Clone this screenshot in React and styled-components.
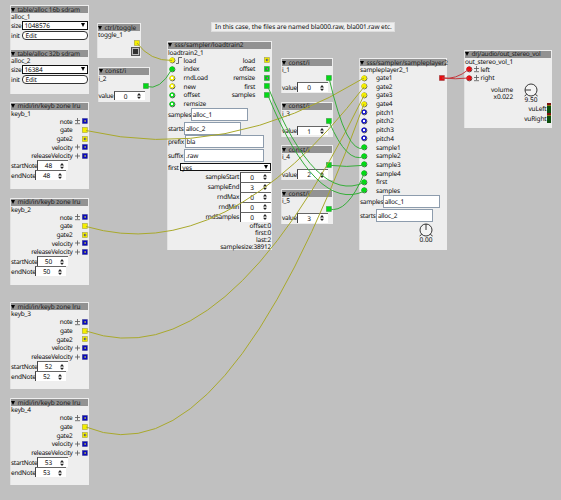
import React from "react";
import styled, { createGlobalStyle } from "styled-components";

const Global = createGlobalStyle`
  body { margin: 0; background: #c0c0c0; overflow: hidden; }
  * { box-sizing: border-box; }
`;

const Canvas = styled.main`
  position: relative;
  width: 561px;
  height: 500px;
  overflow: hidden;
  background: #c0c0c0;
  color: #0c0c0c;
  font: 6.5px/7px "Noto Sans", sans-serif;
  letter-spacing: -0.28px;
  white-space: pre;
  text-rendering: geometricPrecision;
`;

const Panel = styled.section`
  position: absolute;
  left: ${(p) => p.$x}px;
  top: ${(p) => p.$y}px;
  width: ${(p) => p.$w}px;
  height: ${(p) => p.$h}px;
  padding: 1px 1px 1px 0;
  display: flex;
  flex-direction: column;
  background: #eeeeee;
  border-left: 1px solid #e2e2e2;
`;

const Header = styled.header`
  flex: none;
  height: 7px;
  display: flex;
  align-items: center;
  gap: 2px;
  padding-left: 0.4px;
  background: #929292;
  color: #1c1c1c;
  letter-spacing: ${(p) => p.$ls ?? -0.08}px;
`;

const Title = styled.span`
  height: 6px;
  line-height: 5.6px;
`;

const Name = styled.div`
  flex: none;
  height: 7.2px;
  line-height: 7.6px;
  letter-spacing: -0.18px;
`;

const PortRow = styled.div`
  flex: none;
  height: 8.7px;
  display: flex;
  align-items: center;
  justify-content: space-between;
`;

const Inlet = styled.span`
  display: flex;
  align-items: center;
  height: 7px;
  letter-spacing: -0.2px;
`;

const InMark = styled.span`
  width: ${(p) => p.$w}px;
  display: flex;
  align-items: center;
  justify-content: center;
`;

const Outlet = styled.span`
  margin-left: auto;
  display: flex;
  align-items: center;
  justify-content: flex-end;
  height: 7px;
  padding-right: ${(p) => p.$pad}px;
`;

const OutMark = styled.span`
  width: ${(p) => p.$w}px;
  display: flex;
  justify-content: flex-end;
  align-items: center;
  padding-right: ${(p) => (p.$sign ? 2 : 0)}px;
`;

const FieldRow = styled.div`
  flex: none;
  height: ${(p) => p.$h ?? 10}px;
  display: flex;
  align-items: center;
  justify-content: ${(p) => (p.$end ? "flex-end" : "flex-start")};
`;

const Label = styled.span`
  flex: none;
  width: ${(p) => (p.$w ? `${p.$w}px` : "auto")};
  margin-right: ${(p) => p.$gap ?? 0}px;
`;

const NumberBox = styled.span`
  width: 31px;
  height: 9.6px;
  display: flex;
  align-items: center;
  justify-content: space-between;
  padding: 0 4px 0 0;
  background: #fff;
  border-left: 1px solid #444;
  border-top: 1px solid #666;
  letter-spacing: 0;
`;

const NumberValue = styled.span`
  flex: 1;
  text-align: center;
`;

const TextBox = styled.span`
  width: ${(p) => p.$w}px;
  height: 13px;
  padding: 2px 1px 0 0.5px;
  background: #fff;
  border: 1px solid #8d9cad;
  letter-spacing: -0.2px;
`;

const Select = styled.span`
  flex: 1;
  height: 8.6px;
  display: flex;
  align-items: center;
  justify-content: space-between;
  padding: 0 2px 0 1px;
  background: #fff;
  border: 1px solid #111;
  letter-spacing: -0.08px;
`;

const Pill = styled.span`
  flex: 1;
  height: 8.6px;
  padding-left: 3px;
  line-height: 7px;
  background: #fff;
  border: 1px solid #333;
  border-radius: 4px;
  letter-spacing: -0.1px;
`;

const ToggleButton = styled.span`
  align-self: flex-end;
  width: 9px;
  height: 9px;
  background: #303030;
  border: 1px solid #555;
  outline: 1px solid #bbb;
  outline-offset: -2px;
`;

const Readout = styled.div`
  flex: none;
  height: 6.9px;
  text-align: right;
  letter-spacing: -0.2px;
`;

const DialColumn = styled.div`
  display: flex;
  flex-direction: column;
  align-items: center;
  line-height: 6px;
  letter-spacing: 0;
`;

const DialRow = styled.div`
  display: flex;
  justify-content: flex-end;
  padding: 1px 13px 0 0;
`;

const VolumeRow = styled.div`
  display: flex;
  justify-content: flex-end;
  gap: 11px;
  height: 21px;
  padding-right: 12.5px;
  letter-spacing: -0.1px;
`;

const VolumeColumn = styled(DialColumn)`
  padding-top: 1px;
`;

const VolumeText = styled.div`
  padding-top: 5px;
  text-align: right;
  line-height: 6.8px;
`;

const MeterRow = styled.div`
  height: 10px;
  display: flex;
  align-items: center;
  justify-content: flex-end;
  letter-spacing: -0.15px;
`;

const Meter = styled.span`
  width: 4px;
  height: 9.5px;
  background: linear-gradient(#7c1010 0 20%, #8a7a10 20% 32%, #0c4d0c 32%);
`;

const Comment = styled.aside`
  position: absolute;
  left: 211px;
  top: 22px;
  width: 184px;
  height: 10px;
  padding-left: 3px;
  line-height: 8.6px;
  background: #eee;
  border: 1px solid #ddd;
  letter-spacing: -0.07px;
`;

const Wires = styled.svg`
  position: absolute;
  inset: 0;
  pointer-events: none;
  fill: none;
  stroke-width: 1;
`;

const Glyph = styled.svg`
  display: block;
  flex: none;
  overflow: visible;
`;

const COLORS = { y: "#f4ee00", b: "#0808c8", g: "#00dc14", r: "#e80c10" };

function Square({ c, on }) {
  return (
    <Glyph width="6" height="6">
      <rect x="0.3" y="0.4" width="5.2" height="5.2" fill={COLORS[c]} stroke="#444" strokeOpacity=".45" strokeWidth=".6" />
      {!on && (
        <>
          <rect x="1.9" y="1.9" width="2.2" height="2.2" fill="#222" />
          <rect x="2.5" y="2.4" width="1.2" height="1.2" fill="#fff" />
        </>
      )}
    </Glyph>
  );
}

function Ring({ c, on }) {
  return (
    <Glyph width="6" height="6">
      <circle cx="3.4" cy="3.4" r="2.5" stroke="#222" strokeOpacity=".75" fill="none" strokeWidth="1" />
      <circle cx="3" cy="3" r={on ? 2.6 : 1.9} fill={on ? COLORS[c] : "#fff"} stroke={on ? "none" : COLORS[c]} strokeWidth="1.4" />
    </Glyph>
  );
}

const Triangle = () => (
  <Glyph width="4" height="4">
    <path d="M0 0H4L2 4Z" fill="#000" />
  </Glyph>
);

const Spinner = () => (
  <Glyph width="4" height="6">
    <path d="M0 2.4H4L2 0ZM0 3.7H4L2 6Z" fill="#222" />
  </Glyph>
);

const Sign = ({ minus }) => (
  <Glyph width="5" height="6">
    <path d={minus ? "M0 2.5H5M2.5 0V5M0 5.7H5" : "M0 3H5M2.5 .5V5.5"} stroke="#555" strokeWidth=".8" />
  </Glyph>
);

function Dial({ left }) {
  return (
    <Glyph width="14" height="14" fill="none" stroke="#222" strokeWidth=".9">
      <circle cx="7" cy="7" r="6" fill="#f4f4f4" />
      <path d={left ? "M7 7H1.2M2.7 11.4L.6 13M11.3 11.4L13.6 13" : "M7 7V1M2.7 11.4L.6 13M11.3 11.4L13.6 13"} />
    </Glyph>
  );
}

function Node({ x, y, w, h, title, name, ls, children }) {
  return (
    <Panel $x={x} $y={y} $w={w} $h={h}>
      <Header $ls={ls}>
        <Triangle />
        <Title>{title}</Title>
      </Header>
      <Name>{name}</Name>
      {children}
    </Panel>
  );
}

function Output({ label, c, on, sign, w = 0, pad = 0.5 }) {
  return (
    <Outlet $pad={pad}>
      {label}
      <OutMark $w={w} $sign={!!sign}>
        {sign && <Sign minus={sign === "pm"} />}
      </OutMark>
      <Square c={c} on={on} />
    </Outlet>
  );
}

const NumField = ({ value }) => (
  <NumberBox>
    <NumberValue>{value}</NumberValue>
    <Spinner />
  </NumberBox>
);

function Alloc({ y, n, size }) {
  return (
    <Node x={10} y={y} w={79} h={45} title={`table/alloc ${n === 1 ? "16b" : "32b"} sdram`} name={`alloc_${n}`} ls={-0.17}>
      <FieldRow $h={10.6}>
        <Label $w={11.4}>size</Label>
        <Select>
          {size}
          <Triangle />
        </Select>
      </FieldRow>
      <FieldRow>
        <Label $w={10.6}>init</Label>
        <Pill>Edit</Pill>
      </FieldRow>
    </Node>
  );
}

const KEYB_OUTS = [
  ["note", "b", false, "pm"],
  ["gate", "y", true],
  ["gate2", "y", false],
  ["velocity", "b", false, "p"],
  ["releaseVelocity", "b", false, "p"],
];

function Keyb({ y, n, note }) {
  return (
    <Node x={10} y={y} w={79} h={87} title="midi/in/keyb zone lru" name={`keyb_${n}`}>
      {KEYB_OUTS.map(([label, c, on, sign]) => (
        <PortRow key={label}>
          <Output label={label} c={c} on={on} sign={sign} w={9} />
        </PortRow>
      ))}
      <FieldRow>
        <Label $w={25.5}>startNote</Label>
        <NumField value={note} />
      </FieldRow>
      <FieldRow>
        <Label $w={23.6}>endNote</Label>
        <NumField value={note} />
      </FieldRow>
    </Node>
  );
}

function Const({ x, y, n, value }) {
  return (
    <Node x={x} y={y} w={52} h={35} title="const/i" name={`i_${n}`} ls={0.1}>
      <PortRow>
        <Output c="g" on pad={0} />
      </PortRow>
      <FieldRow>
        <Label $w={15}>value</Label>
        <NumField value={value} />
      </FieldRow>
    </Node>
  );
}

function TextField({ label, lw, w, value }) {
  return (
    <FieldRow $h={13.6}>
      <Label $w={lw}>{label}</Label>
      <TextBox $w={w}>{value}</TextBox>
    </FieldRow>
  );
}

const SAMPLER_PORTS = [
  ["load", "y", true, "load", "y", false],
  ["index", "g", true, "offset", "g", false],
  ["rndLoad", "y", false, "remsize", "g", false],
  ["new", "y", false, "first", "g", true],
  ["offset", "g", false, "samples", "g", true],
  ["remsize", "g", false],
];

function Sampler() {
  return (
    <Node x={167} y={40.7} w={105} h={209.5} title="sss/sampler/loadtrain2" name="loadtrain2_1" ls={-0.05}>
      {SAMPLER_PORTS.map(([a, ac, aOn, b, bc, bOn]) => (
        <PortRow key={a}>
          <Inlet>
            <InMark $w={7.4}>
              <Ring c={ac} on={aOn} />
            </InMark>
            <InMark $w={8.2}>
              {a === "load" && (
                <Glyph width="6" height="7">
                  <path d="M0 6.5H2.5V.5H6" fill="none" stroke="#555" strokeWidth=".9" />
                </Glyph>
              )}
            </InMark>
            {a}
          </Inlet>
          {b && <Output label={b} c={bc} on={bOn} w={9} pad={1} />}
        </PortRow>
      ))}
      <TextField label="samples" lw={23.2} w={57} value="alloc_1" />
      <TextField label="starts" lw={16.4} w={57} value="alloc_2" />
      <TextField label="prefix" lw={17} w={79} value="bla" />
      <TextField label="suffix" lw={16.4} w={80} value=".raw" />
      <FieldRow $h={9.6}>
        <Label $w={12.2}>first</Label>
        <Select>
          yes
          <Triangle />
        </Select>
      </FieldRow>
      {[["sampleStart", 0], ["sampleEnd", 3], ["rndMax", 0], ["rndMin", 0], ["rndSamples", 0]].map(([l, v]) => (
        <FieldRow key={l} $end>
          <Label $gap={0.9}>{l}</Label>
          <NumField value={v} />
        </FieldRow>
      ))}
      {["offset:0", "first:0", "last:2", "samplesize:38912"].map((t) => (
        <Readout key={t}>{t}</Readout>
      ))}
    </Node>
  );
}

const PLAYER_PORTS = [
  ...[1, 2, 3, 4].map((n) => [`gate${n}`, "y", true]),
  ...[1, 2, 3, 4].map((n) => [`pitch${n}`, "b", false]),
  ...[1, 2, 3, 4].map((n) => [`sample${n}`, "g", true]),
  ["first", "g", true],
  ["samples", "g", true],
];

function Player() {
  return (
    <Node x={359} y={58} w={88} h={192} title="sss/sampler/sampleplayer2" name="sampleplayer2_1" ls={-0.1}>
      {PLAYER_PORTS.map(([l, c, on]) => (
        <PortRow key={l}>
          <Inlet>
            <InMark $w={8}>
              <Ring c={c} on={on} />
            </InMark>
            <InMark $w={8} />
            {l}
          </Inlet>
          {l === "gate1" && <Output c="r" on pad={1} />}
        </PortRow>
      ))}
      <TextField label="samples" lw={23.2} w={57} value="alloc_1" />
      <TextField label="starts" lw={16.4} w={57} value="alloc_2" />
      <DialRow>
        <DialColumn>
          <Dial />
          0.00
        </DialColumn>
      </DialRow>
    </Node>
  );
}

function StereoOut() {
  return (
    <Node x={464} y={49.6} w={87.5} h={78.4} title="drj/audio/out_stereo_vol" name="out_stereo_vol_1" ls={-0.24}>
      {["left", "right"].map((l) => (
        <PortRow key={l}>
          <Inlet>
            <InMark $w={7}>
              <Ring c="r" on />
            </InMark>
            <InMark $w={8.6}>
              <Sign minus />
            </InMark>
            {l}
          </Inlet>
        </PortRow>
      ))}
      <VolumeRow>
        <VolumeText>
          volume
          <br />
          x0.022
        </VolumeText>
        <VolumeColumn>
          <Dial left />
          9.50
        </VolumeColumn>
      </VolumeRow>
      <MeterRow>
        vuLeft
        <Meter />
      </MeterRow>
      <MeterRow>
        vuRight
        <Meter />
      </MeterRow>
    </Node>
  );
}

const WIRES = [
  ["#a9a92c", "M137 43Q150 61 172 60.5"],
  ["#a9a92c", "M86 130.5Q225 163 364 78"],
  ["#a9a92c", "M86 226.5Q225 267 364 87"],
  ["#a9a92c", "M86 331Q225 380 364 95.5"],
  ["#a9a92c", "M86 427Q225 485 364 104"],
  ["#36ae3a", "M146 86.5Q160 91 172 69"],
  ["#36ae3a", "M268 87Q316 205 364 182.5"],
  ["#36ae3a", "M268 95.5Q316 213 364 191.3"],
  ["#36ae3a", "M329 78Q347 155 364 148"],
  ["#36ae3a", "M329 121.5Q347 164 364 156.5"],
  ["#36ae3a", "M329 165.3Q347 167.5 364 165.3"],
  ["#36ae3a", "M329 209Q347 214 364 174"],
  ["#c43a3e", "M442 78Q456 80 468.5 69.5"],
  ["#c43a3e", "M442 78Q456 79.5 468.5 78"],
];

export default function App() {
  return (
    <>
      <Global />
      <Canvas>
        <Comment>In this case, the files are named bla000.raw, bla001.raw etc.</Comment>
        <Alloc y={5} n={1} size="1048576" />
        <Alloc y={49} n={2} size="16384" />
        <Node x={97} y={23.3} w={44} h={35} title="ctrl/toggle" name="toggle_1" ls={0}>
          <PortRow>
            <Output c="y" on />
          </PortRow>
          <ToggleButton />
        </Node>
        <Const x={97.5} y={66.7} n={2} value={0} />
        <Keyb y={101.6} n={1} note={48} />
        <Keyb y={197.6} n={2} note={50} />
        <Keyb y={302.4} n={3} note={52} />
        <Keyb y={398.4} n={4} note={53} />
        <Sampler />
        <Const x={281} y={58.3} n={1} value={0} />
        <Const x={281} y={101.7} n={3} value={1} />
        <Const x={281} y={145.3} n={4} value={2} />
        <Const x={281} y={189} n={5} value={3} />
        <Player />
        <StereoOut />
        <Wires width="561" height="500">
          {WIRES.map(([stroke, d]) => (
            <path key={d} d={d} stroke={stroke} />
          ))}
        </Wires>
      </Canvas>
    </>
  );
}
